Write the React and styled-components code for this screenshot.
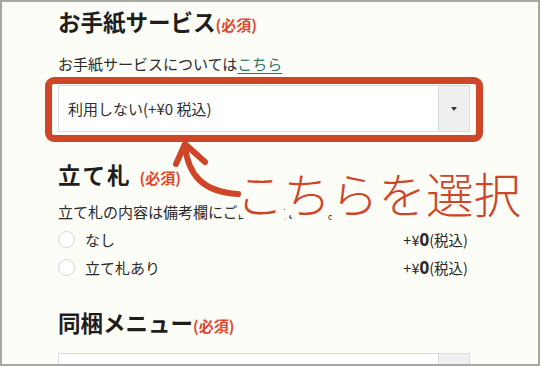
import React from 'react';
import styled, { createGlobalStyle } from 'styled-components';

const GlobalStyle = createGlobalStyle`
  body {
    margin: 0;
    font-family: "Noto Sans CJK JP", "Noto Sans", sans-serif;
    color: #222;
  }
`;

const Page = styled.div`
  position: relative;
  width: 540px;
  height: 366px;
  box-sizing: border-box;
  border: 2px solid #a8a8a3;
  background: #fdfdf8;
  overflow: hidden;
  padding: 4px 0 0 56px;
`;

const Column = styled.div`
  width: 412px;
  display: flex;
  flex-direction: column;
`;

const Heading = styled.h2`
  margin: ${props => props.margin || 0};
  font-size: 22.5px;
  line-height: 30px;
  font-weight: 700;
  color: #1e1e1e;
  letter-spacing: ${props => props.spacing || 0};
  display: flex;
  align-items: baseline;
`;

const Required = styled.span`
  font-size: 15px;
  font-weight: 700;
  color: #e0452c;
  letter-spacing: 0;
  margin-left: ${props => props.gap || '0'};
`;

const Note = styled.p`
  margin: ${props => props.margin || 0};
  font-size: 15px;
  line-height: 22px;
  color: #2a2a2a;
  white-space: nowrap;
`;

const Link = styled.a`
  color: #2b7566;
  text-decoration: underline;
  text-underline-offset: 3px;
`;

const SelectBox = styled.div`
  position: relative;
  margin: ${props => props.margin || 0};
  height: 47px;
  box-sizing: border-box;
  border: 1px solid #d8dcdc;
  background: #fff;
  display: flex;
  align-items: stretch;

  ${props => props.highlight && `
    &::after {
      content: '';
      position: absolute;
      left: -14px;
      right: -14px;
      top: -9px;
      bottom: -11px;
      border: 7px solid #cf4528;
      border-radius: 9px;
    }
  `}
`;

const SelectValue = styled.div`
  flex: 1;
  display: flex;
  align-items: center;
  padding-left: 9px;
  font-size: 15px;
  color: #2e2e2e;
`;

const SelectButton = styled.div`
  width: 30px;
  border-left: 1px solid #d8dcdc;
  background: #efefef;
  display: flex;
  align-items: center;
  justify-content: center;

  &::before {
    content: '';
    border-left: 3px solid transparent;
    border-right: 3px solid transparent;
    border-top: 4px solid #333;
  }
`;

const OptionRow = styled.label`
  height: 28px;
  display: flex;
  align-items: center;
  font-size: 15px;
  color: #2a2a2a;
`;

const Radio = styled.span`
  width: 15px;
  height: 15px;
  border-radius: 50%;
  border: 1px solid #d3d3d0;
  background: #fff;
  margin-right: 10px;
`;

const OptionLabel = styled.span`
  flex: 1;
`;

const Price = styled.span`
  margin-right: 2px;
  font-size: 14.5px;
  b {
    font-size: 17px;
    font-weight: 700;
    font-family: "Noto Sans", sans-serif;
  }
`;

const Callout = styled.div`
  position: absolute;
  left: 234px;
  top: 167px;
  font-size: 47.5px;
  line-height: 48px;
  font-weight: 300;
  color: #cf4528;
  white-space: nowrap;
  -webkit-text-stroke: 16px #fdfdf8;
  paint-order: stroke fill;
  text-shadow: 0 0 6px #fdfdf8, 0 0 10px #fdfdf8, 0 0 14px #fdfdf8;
`;

const Arrow = styled.svg`
  position: absolute;
  left: 0;
  top: 0;
  pointer-events: none;
`;

function PriceTag() {
  return <Price>+¥<b>0</b>(税込)</Price>;
}

export default function App() {
  return (
    <Page>
      <GlobalStyle />
      <Column>
        <Heading>
          お手紙サービス<Required>(必須)</Required>
        </Heading>
        <Note margin="13px 0 0">
          お手紙サービスについては<Link href="#">こちら</Link>
        </Note>
        <SelectBox highlight margin="10px 0 0">
          <SelectValue>利用しない(+¥0 税込)</SelectValue>
          <SelectButton />
        </SelectBox>

        <Heading margin="27px 0 0" spacing="2px">
          立て札<Required gap="8px">(必須)</Required>
        </Heading>
        <Note margin="8px 0 0">立て札の内容は備考欄にご記入ください。</Note>
        <OptionRow style={{ marginTop: 2 }}>
          <Radio />
          <OptionLabel>なし</OptionLabel>
          <PriceTag />
        </OptionRow>
        <OptionRow>
          <Radio />
          <OptionLabel>立て札あり</OptionLabel>
          <PriceTag />
        </OptionRow>

        <Heading margin="26px 0 0">
          同梱メニュー<Required>(必須)</Required>
        </Heading>
        <SelectBox margin="12px 0 0">
          <SelectValue />
          <SelectButton />
        </SelectBox>
      </Column>

      <Callout>こちらを選択</Callout>
      <Arrow width="536" height="362" viewBox="0 0 536 362">
        <g fill="none" stroke="#cf4528" strokeWidth="6" strokeLinecap="round" strokeLinejoin="round">
          <path d="M183 144 C 186 172, 200 190, 236 192" />
          <path d="M174 162 L183 142 L203 160" />
        </g>
      </Arrow>
    </Page>
  );
}
